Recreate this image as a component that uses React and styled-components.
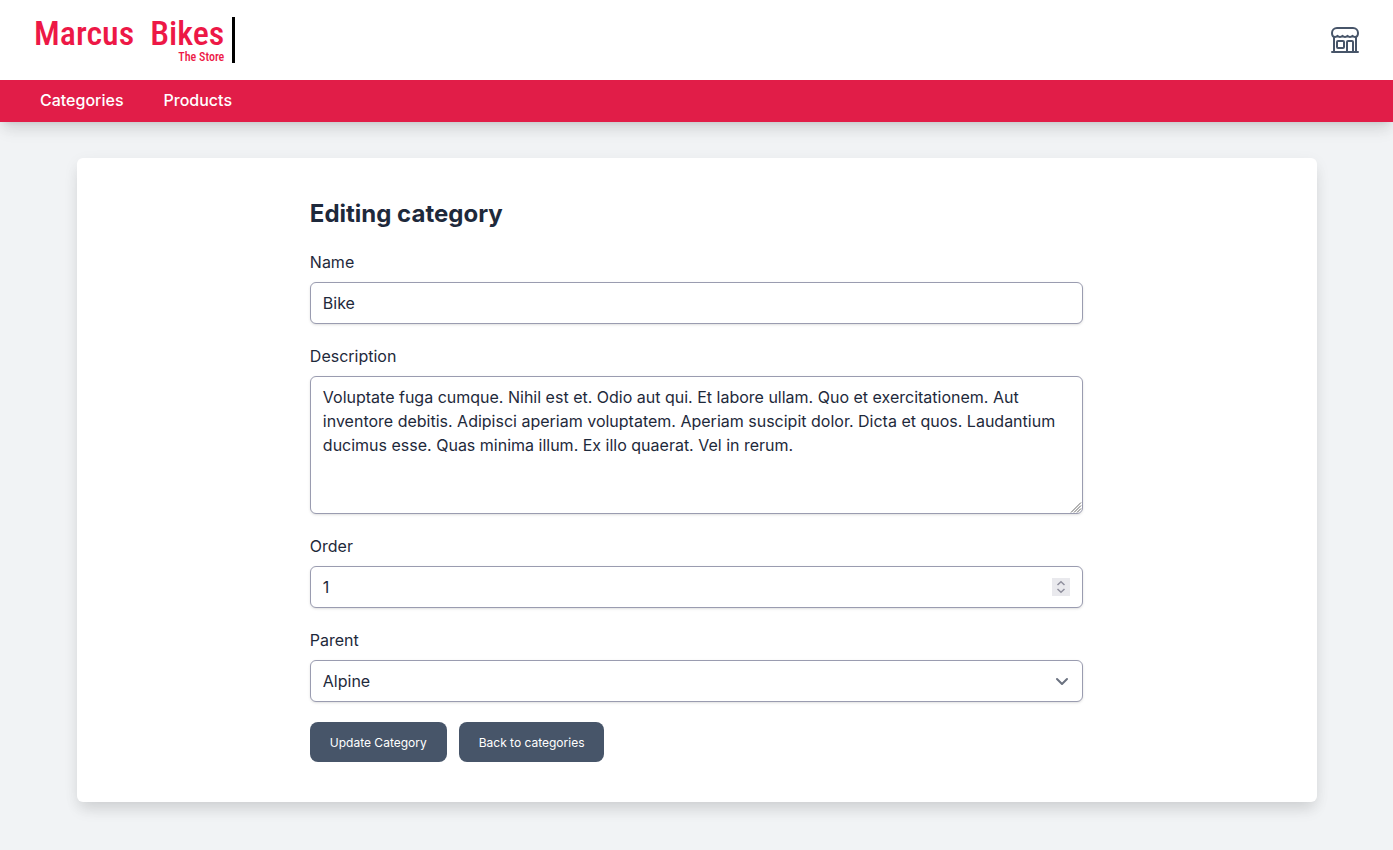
import React from "react";
import styled, { createGlobalStyle } from "styled-components";

const GlobalStyle = createGlobalStyle`
  *, *::before, *::after { box-sizing: border-box; }
  body {
    margin: 0;
    min-height: 100vh;
    background: #f1f3f5;
    color: #1e293b;
    font: 400 16px/24px Inter, sans-serif;
  }
  button, input, textarea, select { font: inherit; color: inherit; }
`;

const Header = styled.header`
  background: #fff;
  box-shadow: 0 10px 15px -3px rgba(0, 0, 0, 0.1), 0 4px 6px -4px rgba(0, 0, 0, 0.1), 0 4px 16px rgba(0, 0, 0, 0.04);
`;

const TopBar = styled.div`
  display: flex;
  align-items: center;
  justify-content: space-between;
  height: 80px;
  padding: 0 32px;
`;

const Logo = styled.a`
  display: flex;
  align-items: stretch;
  gap: 8px;
  height: 46px;
  padding-left: 2px;
  color: #ed1846;
  font-family: "Roboto Condensed", Roboto, sans-serif;
  font-weight: 500;
  text-decoration: none;
`;

const LogoText = styled.span`
  display: flex;
  flex-direction: column;
  align-items: flex-end;
`;

const LogoName = styled.span`
  display: flex;
  gap: 16px;
  font-size: 34px;
  line-height: 32px;
`;

const LogoTag = styled.span`
  font-size: 12px;
  line-height: 16px;
`;

const LogoBar = styled.span`
  width: 3px;
  background: #000;
`;

const StoreLink = styled.a`
  display: flex;
  color: #475569;
`;

const Nav = styled.nav`
  display: flex;
  gap: 40px;
  padding: 8px 40px 10px;
  background: #e11d48;
`;

const NavLink = styled.a`
  color: #fff;
  font-weight: 500;
  text-decoration: none;
`;

const Main = styled.main`
  padding: 36px 20px 48px;
`;

const Card = styled.section`
  max-width: 1240px;
  margin: 0 auto;
  padding: 40px;
  border-radius: 6px;
  background: #fff;
  box-shadow: 0 10px 15px -3px rgba(0, 0, 0, 0.1), 0 4px 16px rgba(0, 0, 0, 0.06);
`;

const Form = styled.form`
  display: flex;
  flex-direction: column;
  gap: 20px;
  width: calc(100% * 2 / 3);
  margin: 0 auto;
`;

const Title = styled.h1`
  margin: 0;
  font-size: 24px;
  line-height: 32px;
  font-weight: 700;
`;

const Field = styled.div`
  display: flex;
  flex-direction: column;
  gap: 8px;
`;

const Control = styled.input`
  display: block;
  width: 100%;
  height: ${(p) => (p.as === "textarea" ? "138px" : "42px")};
  margin: 0;
  padding: 8px 12px;
  border: 1px solid #9a9cb0;
  border-radius: 6px;
  background: #fff;
  box-shadow: 0 1px 3px rgba(0, 0, 0, 0.1), 0 1px 2px -1px rgba(0, 0, 0, 0.1);
  appearance: none;
  outline: none;
  resize: vertical;

  &[type="number"] { appearance: textfield; }
  &::-webkit-inner-spin-button { appearance: none; }
  &::-webkit-resizer { background: transparent; }
`;

const ControlWrap = styled.div`
  position: relative;
`;

const Adornment = styled.span`
  position: absolute;
  top: 0;
  bottom: 0;
  right: 13px;
  display: flex;
  align-items: center;
  pointer-events: none;
`;

const Grip = styled.span`
  position: absolute;
  right: 1px;
  bottom: 1px;
  display: flex;
  pointer-events: none;
`;

const Actions = styled.div`
  display: flex;
  gap: 12px;
`;

const Button = styled.button`
  display: inline-flex;
  align-items: center;
  height: 40px;
  padding: 2px 20px 0;
  border: 0;
  border-radius: 8px;
  background: #475569;
  color: #fff;
  font-size: 12px;
  line-height: 16px;
  text-decoration: none;
  cursor: pointer;
`;

function StoreIcon() {
  return (
    <svg width="32" height="32" viewBox="0 0 32 32" fill="none" stroke="currentColor" strokeWidth="2" strokeLinecap="round" strokeLinejoin="round" aria-hidden="true">
      <path d="M8 4h16a5 5 0 0 1 5 5c0 2.500-1.200 4-3 4-1.300 0-2-.4-2.500-1.200C23 12.600 22.200 13 21 13s-2-.4-2.500-1.200C18 12.600 17.200 13 16 13s-2-.4-2.500-1.200C13 12.600 12.200 13 11 13s-2-.4-2.500-1.200C8 12.600 7.200 13 6 13c-1.800 0-3-1.500-3-4a5 5 0 0 1 5-5z" />
      <path d="M5 13v15M27 13v15M3 28h26" />
      <rect x="8" y="17" width="7" height="7" rx="1" />
      <path d="M18 28V18a1 1 0 0 1 1-1h4a1 1 0 0 1 1 1v10" />
    </svg>
  );
}

function SpinIcon() {
  return (
    <svg width="18" height="18" viewBox="0 0 18 18" fill="none" stroke="#8f8f9d" strokeWidth="1.500" aria-hidden="true">
      <rect width="18" height="18" fill="#e9e9ed" stroke="none" />
      <path d="M5.500 7 9 3.800 12.500 7M5.500 11 9 14.200 12.500 11" />
    </svg>
  );
}

function ChevronIcon() {
  return (
    <svg width="18" height="18" viewBox="0 0 18 18" fill="none" stroke="#6b7280" strokeWidth="2" strokeLinecap="round" strokeLinejoin="round" aria-hidden="true">
      <path d="m5 7 5 5 5-5" />
    </svg>
  );
}

function GripIcon() {
  return (
    <svg width="12" height="12" viewBox="0 0 12 12" fill="none" stroke="#666" aria-hidden="true">
      <path d="M1 11.500 11 1.500M4 11.500 11 4.500M7 11.500 11 7.500" />
    </svg>
  );
}

export default function App() {
  return (
    <>
      <GlobalStyle />
      <Header>
        <TopBar>
          <Logo href="#" aria-label="Marcus Bikes The Store">
            <LogoText>
              <LogoName><span>Marcus</span><span>Bikes</span></LogoName>
              <LogoTag>The Store</LogoTag>
            </LogoText>
            <LogoBar />
          </Logo>
          <StoreLink href="#" aria-label="Store"><StoreIcon /></StoreLink>
        </TopBar>
        <Nav>
          <NavLink href="#">Categories</NavLink>
          <NavLink href="#">Products</NavLink>
        </Nav>
      </Header>
      <Main>
        <Card>
          <Form onSubmit={(e) => e.preventDefault()}>
            <Title>Editing category</Title>
            <Field>
              <label htmlFor="name">Name</label>
              <Control id="name" type="text" defaultValue="Bike" />
            </Field>
            <Field>
              <label htmlFor="description">Description</label>
              <ControlWrap>
                <Control
                  as="textarea"
                  id="description"
                  defaultValue="Voluptate fuga cumque. Nihil est et. Odio aut qui. Et labore ullam. Quo et exercitationem. Aut inventore debitis. Adipisci aperiam voluptatem. Aperiam suscipit dolor. Dicta et quos. Laudantium ducimus esse. Quas minima illum. Ex illo quaerat. Vel in rerum."
                />
                <Grip><GripIcon /></Grip>
              </ControlWrap>
            </Field>
            <Field>
              <label htmlFor="order">Order</label>
              <ControlWrap>
                <Control id="order" type="number" defaultValue="1" />
                <Adornment><SpinIcon /></Adornment>
              </ControlWrap>
            </Field>
            <Field>
              <label htmlFor="parent">Parent</label>
              <ControlWrap>
                <Control as="select" id="parent" defaultValue="Alpine">
                  <option>Alpine</option>
                </Control>
                <Adornment><ChevronIcon /></Adornment>
              </ControlWrap>
            </Field>
            <Actions>
              <Button type="submit">Update Category</Button>
              <Button as="a" href="#">Back to categories</Button>
            </Actions>
          </Form>
        </Card>
      </Main>
    </>
  );
}
